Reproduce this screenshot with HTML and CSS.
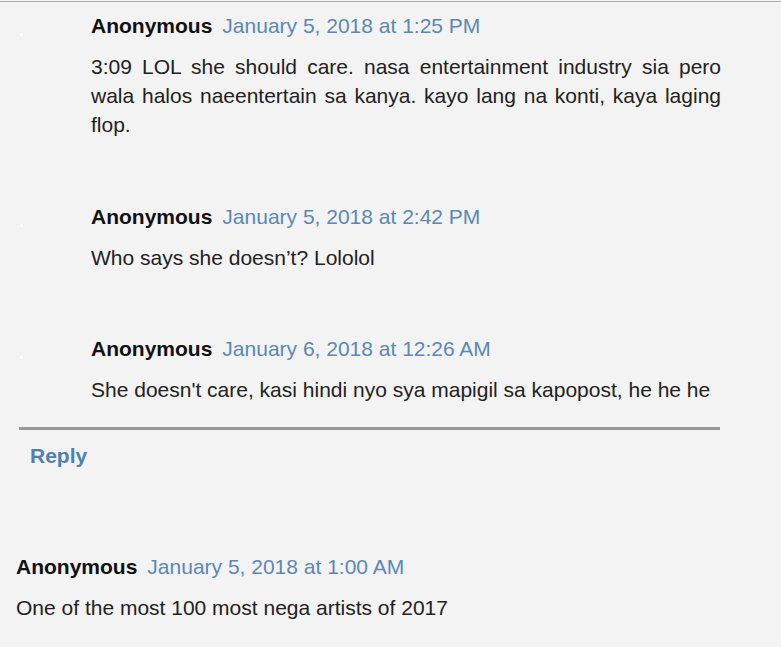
FILE: index.html
```html
<!DOCTYPE html>
<html>
<head>
<meta charset="utf-8">
<link rel="stylesheet" href="styles.css">
</head>
<body>
<div class="page">
  <div class="thread">
    <div class="reply">
      <div class="avatar"><span class="dot"></span></div>
      <div class="content">
        <div class="head"><span class="name">Anonymous</span><a class="date">January 5, 2018 at 1:25 PM</a></div>
        <p class="text">3:09 LOL she should care. nasa entertainment industry sia pero wala halos naeentertain sa kanya. kayo lang na konti, kaya laging flop.</p>
      </div>
    </div>
    <div class="reply">
      <div class="avatar"><span class="dot"></span></div>
      <div class="content">
        <div class="head"><span class="name">Anonymous</span><a class="date">January 5, 2018 at 2:42 PM</a></div>
        <p class="text">Who says she doesn’t? Lololol</p>
      </div>
    </div>
    <div class="reply">
      <div class="avatar"><span class="dot"></span></div>
      <div class="content">
        <div class="head"><span class="name">Anonymous</span><a class="date">January 6, 2018 at 12:26 AM</a></div>
        <p class="text">She doesn't care, kasi hindi nyo sya mapigil sa kapopost, he he he</p>
      </div>
    </div>
    <div class="divider"></div>
    <a class="reply-link">Reply</a>
  </div>
  <div class="comment">
    <div class="head"><span class="name">Anonymous</span><a class="date">January 5, 2018 at 1:00 AM</a></div>
    <p class="text">One of the most 100 most nega artists of 2017</p>
  </div>
</div>
</body>
</html>
```
FILE: styles.css
```css
html, body {
  margin: 0;
  padding: 0;
  background: #f3f3f3;
}
body {
  font-family: "Liberation Sans", Arial, sans-serif;
  font-size: 21px;
  line-height: 29px;
  color: #222;
  overflow: hidden;
}
.page {
  margin-top: 1px;
  border-top: 1px solid #aaaaaa;
  padding: 9px 0 0 16px;
}
.thread {
  margin-left: 3px;
  width: 702px;
}
.reply {
  display: flex;
  margin-bottom: 63px;
}
.reply:nth-child(2) {
  margin-bottom: 62px;
}
.reply:nth-child(3) {
  margin-bottom: 23px;
}
.avatar {
  width: 72px;
  flex: none;
  position: relative;
}
.dot {
  position: absolute;
  left: 1px;
  top: 22px;
  width: 3px;
  height: 3px;
  background: #ffffff;
}
.content {
  width: 630px;
}
.head {
  display: flex;
  gap: 10px;
  white-space: nowrap;
}
.name {
  font-weight: bold;
  color: #111;
}
.date {
  color: #5b88b5;
}
.text {
  margin: 12px 0 0;
  text-align: justify;
}
.divider {
  height: 3px;
  background: #999999;
  width: 701px;
}
.reply-link {
  display: block;
  margin: 11px 0 0 11px;
  font-weight: bold;
  color: #4f80b0;
}
.comment {
  margin-top: 82px;
}
```
